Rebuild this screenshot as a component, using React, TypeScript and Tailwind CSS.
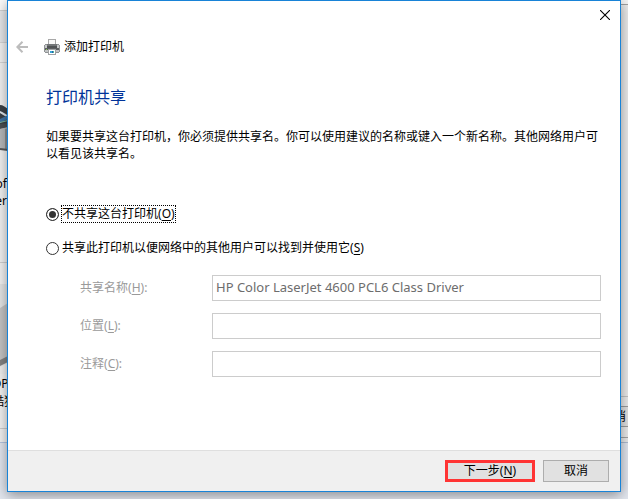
import { useState } from 'react'

const fields = [
	{ id: 'share-name', label: '共享名称', hotkey: 'H', value: 'HP Color LaserJet 4600 PCL6 Class Driver' },
	{ id: 'location', label: '位置', hotkey: 'L', value: '' },
	{ id: 'comment', label: '注释', hotkey: 'C', value: '' },
]

const options = [
	{ id: 'no-share', label: '不共享这台打印机', hotkey: 'O' },
	{ id: 'share', label: '共享此打印机以便网络中的其他用户可以找到并使用它', hotkey: 'S' },
]

function Hotkey({ letter }: { letter: string }) {
	return (
		<>
			(<span className="underline underline-offset-2">{letter}</span>)
		</>
	)
}

function PrinterIcon() {
	return (
		<svg viewBox="0 0 16 16" className="size-4" shapeRendering="crispEdges" aria-hidden="true">
			<path d="M4 0h8v6H4z" fill="#a8a8a8" />
			<path d="M5 1h6v5H5z" fill="#f8f8f8" />
			<path d="M1 5h14v1h1v7h-1v1H1v-1H0V6h1z" fill="#8f9294" />
			<path d="M1 6h2v3H1zM13 6h2v3h-2z" fill="#c6c8c9" />
			<path d="M3 5h10v2H3z" fill="#737678" />
			<path d="M3 7h10v2H3z" fill="#505355" />
			<path d="M1 9h14v2H1z" fill="#5c5f61" />
			<path d="M2 10h1v1H2z" fill="#8fd14f" />
			<path d="M1 11h14v2H1z" fill="#c2c4c5" />
			<path d="M4 10h8v6H4z" fill="#a0a2a4" />
			<path d="M5 11h6v4H5z" fill="#ffffff" />
			<path d="M6 12h2v2H6z" fill="#35a5d8" />
			<path d="M8 12h1v2H8z" fill="#1f5fa8" />
			<path d="M9 12h1v2H9z" fill="#4fb59a" />
		</svg>
	)
}

function BackArrow() {
	return (
		<svg viewBox="0 0 12 12" className="size-3" fill="none" stroke="#bcbcbc" strokeWidth="2" aria-hidden="true">
			<path d="M12 6H1.5M6.5.7 1.3 6l5.2 5.3" />
		</svg>
	)
}

// Slices of the windows that stick out behind the dialog
function Backdrop() {
	return (
		<div className="absolute inset-0 overflow-hidden text-xs leading-[17px] text-black" aria-hidden="true">
			<div className="absolute left-0 top-0 h-[443px] w-2 border-b border-[#b5c5df] bg-[#f2f2f2]">
				<div className="h-[11px] border-b border-[#cfcfcf] bg-[#fafafa]" />
				<div className="h-8 border-b border-[#d5d5d5] bg-[#e6e7e9]" />
				<div className="h-5 border-b border-[#d5d5d5]" />
				<svg viewBox="0 0 8 50" className="absolute left-0 top-[104px] h-[50px] w-2">
					<path d="M0 1c3 0 5 2 8 4v16H0z" fill="#3a4046" />
					<path d="M0 7c3 1 6 3 8 5v2L0 9z" fill="#dfe6ec" />
					<path d="M0 15l8-4v4l-8 4z" fill="#3f74a6" />
					<path d="M0 18l8-2v1l-8 2z" fill="#7fb59a" />
					<path d="M0 20l8-1v5l-8 1z" fill="#4a4e52" />
					<path d="M0 25l8-2v23H0z" fill="#b6b8ba" />
					<path d="M5 25l3-1v21H5z" fill="#8c8e90" />
					<path d="M0 45l8 1" stroke="#56585a" strokeWidth="2" />
				</svg>
				<p className="absolute right-px top-[175px] text-right">
					of
					<br />
					er
				</p>
				<div className="absolute left-0 top-[262px] w-2 border-t border-[#d0d0d0]" />
				<svg viewBox="0 0 8 90" className="absolute left-0 top-[284px] h-[90px] w-2">
					<path d="M0 0h8v90H0z" fill="#e4e5e5" />
					<path d="M0 24l8-5v57l-8 5z" fill="#c4c4c4" />
					<path d="M0 76l8-4v6l-8 4z" fill="#828282" />
					<path d="M0 83l8-4v11H0z" fill="#efefef" />
				</svg>
				<p className="absolute -left-2 top-[375px] whitespace-nowrap leading-[18px]">
					OP
					<br />
					酷狗
				</p>
				<div className="absolute left-0 top-[428px] w-2 border-t border-[#cccccc]" />
			</div>
			<div className="absolute right-0 top-0 h-[443px] w-2 border-b border-[#aebbd0] bg-[#eaeaea]">
				<div className="h-[5px] border-b border-[#a0a0a0] bg-[#f4f4f4]" />
				<div className="absolute left-0 top-[396px] w-2 border-t border-[#c2c2c2]" />
				<div className="absolute right-0 top-[406px] flex h-[21px] w-5 items-center justify-end border-y border-[#9c9c9c] bg-[#e1e1e1] pr-0.5">
					消
				</div>
				<div className="absolute left-0 top-[437px] w-2 border-t border-[#a3a3a3]" />
			</div>
		</div>
	)
}

export default function App() {
	const [selected, setSelected] = useState('no-share')

	return (
		<div className="relative min-h-screen bg-[#e2e6ee] px-[7px] pb-[7px] font-['Noto_Sans','Noto_Sans_CJK_SC',sans-serif] text-xs text-black">
			<Backdrop />
			<main className="relative flex flex-col border border-[#1883d7] bg-white shadow-[0_3px_12px_rgba(0,0,0,0.4)]">
				<div className="flex justify-end pr-[9px] pt-2">
					<button type="button" aria-label="关闭" className="p-px">
						<svg viewBox="0 0 10 10" className="size-2.5" stroke="#000" strokeWidth="1.1" aria-hidden="true">
							<path d="M0 0l10 10M10 0L0 10" />
						</svg>
					</button>
				</div>
				<header className="mt-4 flex h-5 items-center pl-2">
					<button type="button" aria-label="返回" disabled>
						<BackArrow />
					</button>
					<span className="ml-4 mr-1 flex">
						<PrinterIcon />
					</span>
					<span>添加打印机</span>
				</header>

				<section className="pb-[73px] pl-[38px] pr-[19px] pt-7">
					<h1 className="text-base leading-6 text-[#003399]">打印机共享</h1>
					<p className="mt-[19px] leading-[17px]">
						如果要共享这台打印机，你必须提供共享名。你可以使用建议的名称或键入一个新名称。其他网络用户可以看见该共享名。
					</p>

					<div className="mt-[43px] flex flex-col items-start gap-4">
						{options.map((option) => (
							<div key={option.id} className="flex h-[18px] items-center gap-0.5">
								<input
									type="radio"
									name="sharing"
									id={option.id}
									checked={selected === option.id}
									onChange={() => setSelected(option.id)}
									className="size-[13px] appearance-none rounded-full border border-[#333333] bg-white checked:bg-[#333333] checked:shadow-[inset_0_0_0_2px_#fff]"
								/>
								<label
									htmlFor={option.id}
									className={
										selected === option.id
											? 'border border-dotted border-black leading-4'
											: 'border border-transparent leading-4'
									}
								>
									{option.label}
									<Hotkey letter={option.hotkey} />
								</label>
							</div>
						))}
					</div>

					<div className="mt-[18px] flex flex-col gap-3 pl-[34px]">
						{fields.map((field) => (
							<div key={field.id} className="flex items-center">
								<label htmlFor={field.id} className="w-[132px] shrink-0 text-[#9a9a9a]">
									{field.label}
									<Hotkey letter={field.hotkey} />:
								</label>
								<input
									id={field.id}
									type="text"
									defaultValue={field.value}
									disabled
									className="h-[26px] min-w-0 flex-1 border border-[#cccccc] bg-white px-[3px] pb-0.5 text-[13px] text-[#6d6d6d]"
								/>
							</div>
						))}
					</div>
				</section>

				<footer className="flex items-center justify-end gap-2 border-t border-[#dfdfdf] bg-[#f0f0f0] px-[11px] py-[9px]">
					<button type="button" className="h-[22px] w-[90px] border-3 border-[#ff3434] bg-[#e1e1e1] leading-4">
						下一步
						<Hotkey letter="N" />
					</button>
					<button type="button" className="h-[22px] w-[66px] border border-[#adadad] bg-[#e1e1e1] leading-4">
						取消
					</button>
				</footer>
			</main>
		</div>
	)
}
